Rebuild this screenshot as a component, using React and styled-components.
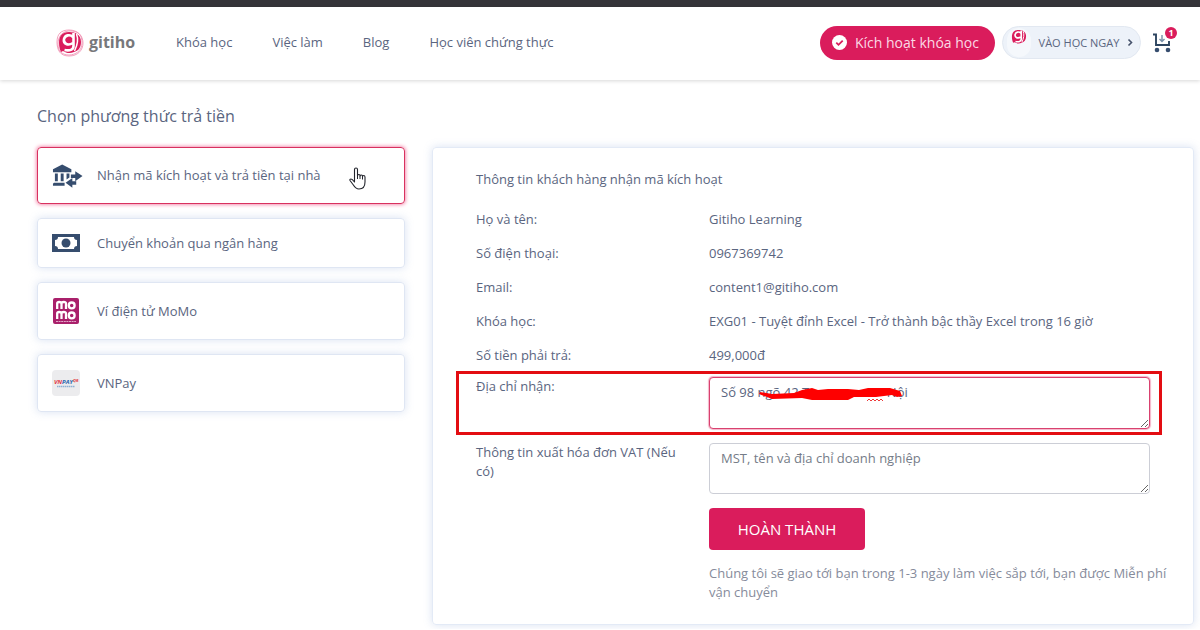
import React, { useState } from "react";
import styled, { createGlobalStyle, css } from "styled-components";

const pink = "#da1c5c";
const ink = "#5a6580";
const navy = "#364d6e";

const GlobalStyle = createGlobalStyle`
  *, *::before, *::after { box-sizing: border-box; }
  body {
    margin: 0;
    background: #fff;
    color: ${ink};
    font-family: "Open Sans", "Noto Sans", sans-serif;
    font-size: 13px;
    line-height: 19px;
  }
  button, textarea { font: inherit; color: inherit; }
`;

const TopStrip = styled.div`
  height: 7px;
  background: #353439;
`;

const Header = styled.header`
  display: flex;
  align-items: center;
  height: 73px;
  padding: 0 28px 2px 56px;
  box-shadow: 0 1px 4px rgba(0, 0, 0, 0.16);
`;

const Brand = styled.a`
  display: flex;
  align-items: center;
  gap: 5px;
  width: 120px;
  color: #77787b;
  font-size: 16px;
  font-weight: 700;
  text-decoration: none;
`;

const Nav = styled.nav`
  display: flex;
  flex: 1;
  gap: 40px;
`;

const NavLink = styled.a`
  color: ${ink};
  white-space: nowrap;
  text-decoration: none;
`;

const Actions = styled.div`
  display: flex;
  align-items: center;
  gap: 7px;
`;

const ActivateButton = styled.button`
  display: flex;
  align-items: center;
  gap: 8px;
  width: 175px;
  height: 34px;
  padding: 0 12px;
  border: 0;
  border-radius: 17px;
  background: ${pink};
  color: #fbd9e5;
  font-size: 14px;
  white-space: nowrap;
`;

const LearnButton = styled.button`
  display: flex;
  align-items: center;
  justify-content: space-between;
  width: 139px;
  height: 33px;
  padding: 0 6px 0 4px;
  border: 1px solid #e2e8f1;
  border-radius: 17px;
  background: #edf2f9;
  font-size: 11px;
  white-space: nowrap;
`;

const Avatar = styled.span`
  display: flex;
  justify-content: center;
  width: 24px;
  height: 29px;
  border-radius: 12px;
  background: #f5f8fc;
`;

const CartButton = styled.button`
  position: relative;
  display: flex;
  margin-left: 4px;
  padding: 0;
  border: 0;
  background: none;
`;

const CartCount = styled.span`
  position: absolute;
  top: -6px;
  right: -5px;
  width: 12px;
  height: 12px;
  border-radius: 6px;
  background: ${pink};
  color: #fff;
  font-size: 9px;
  font-weight: 700;
  line-height: 12px;
  text-align: center;
`;

const Main = styled.main`
  padding: 24px 6px 4px 37px;
`;

const Heading = styled.h1`
  margin: 0 0 19px;
  font-size: 16px;
  font-weight: 400;
  line-height: 24px;
`;

const Columns = styled.div`
  display: grid;
  grid-template-columns: 368px minmax(0, 1fr);
  align-items: start;
  gap: 27px;
`;

const Methods = styled.div`
  display: flex;
  flex-direction: column;
  gap: 14px;
`;

const Method = styled.label`
  position: relative;
  display: flex;
  align-items: center;
  gap: 14px;
  height: ${(p) => p.$height}px;
  padding: 0 14px;
  border: 1px solid #dfe6f3;
  border-radius: 4px;
  box-shadow: 0 0 9px rgba(120, 150, 210, 0.28);
  cursor: pointer;
  ${(p) => p.$active && css`
    border-color: #d8315f;
    box-shadow: 0 0 4px #f0578a;
  `}
`;

const HiddenRadio = styled.input`
  position: absolute;
  opacity: 0;
  pointer-events: none;
`;

const MethodIcon = styled.span`
  display: flex;
  width: 31px;
`;

const Pointer = styled.svg`
  position: absolute;
  top: 19px;
  right: 38px;
`;

const Panel = styled.form`
  margin: 0;
  padding: 22px 43px 22px;
  border: 1px solid #e3eaf6;
  border-radius: 4px;
  box-shadow: 0 0 9px rgba(120, 150, 210, 0.28);
`;

const PanelTitle = styled.h2`
  margin: 0 0 21px;
  font-size: 13px;
  font-weight: 400;
  line-height: 19px;
`;

const Details = styled.dl`
  display: flex;
  flex-direction: column;
  gap: 15px;
  margin: 0 0 12px;
`;

const Row = styled.div`
  position: relative;
  display: grid;
  grid-template-columns: 205px minmax(0, 1fr);
  gap: 28px;
`;

const Value = styled.dd`
  margin: 0;
`;

const Fields = styled.div`
  display: flex;
  flex-direction: column;
  gap: 14px;
`;

const Control = styled.div`
  position: relative;
  display: flex;
`;

const TextArea = styled.textarea`
  width: 100%;
  height: ${(p) => (p.$focused ? 52 : 51)}px;
  padding: 5px 11px;
  border: 1px solid ${(p) => (p.$focused ? "#d9416f" : "#ccced6")};
  border-radius: 4px;
  outline: 0;
  background: #fff;
  box-shadow: ${(p) => (p.$focused ? "0 0 1px 1px #f4b3c8" : "none")};
  resize: vertical;
  &::placeholder { color: #757c88; opacity: 1; }
`;

const Highlight = styled.span`
  position: absolute;
  inset: -6px -12px -6px -20px;
  border: 3px solid #e30d12;
  pointer-events: none;
`;

const Scribble = styled.svg`
  position: absolute;
  top: 9px;
  left: 49px;
  pointer-events: none;
`;

const Finish = styled.div`
  grid-column: 2;
`;

const SubmitButton = styled.button`
  width: 156px;
  height: 42px;
  border: 0;
  border-radius: 4px;
  background: ${pink};
  color: #fff;
  font-size: 15px;
`;

const Note = styled.p`
  margin: 14px -24px 0 0;
  color: #868b9b;
`;

const Mark = ({ size, plain }) => (
  <svg width={size} height={size} viewBox="0 0 28 28" aria-hidden="true">
    {!plain && (
      <g fill="none" stroke="#ef8aad" strokeWidth=".8">
        <path d="M13 1C5 1 1 5 1 13s3 14 12 14 14-6 14-13S22 1 13 1Z" />
        <path d="M16 2C7 1 2 7 2 15s5 11 11 11 13-4 13-12S23 3 16 2Z" />
      </g>
    )}
    <path fill={pink} d="M13 3C6 3 3 7 3 14c0 4 1 7 2 9l2-1c3 2 7 3 11 1 4-1 7-4 7-10 0-7-5-10-12-10Z" />
    <path fill="none" stroke="#fff" strokeWidth="2.600" d="M17 8c-3-3-8-2-9 2-1 5 4 7 9 4M17.500 4v13c0 4-4 5-9 4" />
    <path fill="none" stroke="#fff" strokeWidth="1.500" d="M20.500 5c2 5 1 11-2 17" />
  </svg>
);

const CheckIcon = () => (
  <svg width="15" height="15" viewBox="0 0 15 15" aria-hidden="true">
    <circle cx="7.500" cy="7.500" r="7.500" fill="#fff" />
    <path d="m4.300 7.600 2.200 2.200 4.200-4.200" fill="none" stroke={pink} strokeWidth="1.800" />
  </svg>
);

const ChevronIcon = () => (
  <svg width="7" height="9" viewBox="0 0 7 9" aria-hidden="true">
    <path d="m1.500 1.500 3 3-3 3" fill="none" stroke="#45516a" strokeWidth="1.600" />
  </svg>
);

const CartIcon = () => (
  <svg width="20" height="20" viewBox="0 0 20 20" aria-hidden="true">
    <path d="M1 1.500h3v10.500h13V8" fill="none" stroke="#2d4560" strokeWidth="1.900" />
    <path d="M10 2v6M7.500 6 10 8.500 12.500 6" fill="none" stroke="#7890a8" strokeWidth="1.400" />
    <circle cx="5" cy="17" r="2.300" fill={navy} />
    <circle cx="16" cy="17" r="2.300" fill={navy} />
  </svg>
);

const BankIcon = () => (
  <svg width="32" height="24" viewBox="0 0 32 24" fill={navy} aria-hidden="true">
    <path d="M10.500 0 20 5v3H1V5ZM3 9.500h3v8H3zM9 9.500h3v8H9zM15 9.500h3v4l-3 2zM2 19h11v3H1v-2z" />
    <path d="M24 7v3.500h-4.500v3.500H24v3.500L31.500 12ZM21 14v3.500h4v3.500h-4v3L14 19Z" />
  </svg>
);

const CashIcon = () => (
  <svg width="28" height="18" viewBox="0 0 28 18" aria-hidden="true">
    <path fill={navy} d="M0 0h28v18H0z" />
    <path fill="#fff" d="M6 3h16c0 2 1 3 3 3v6c-2 0-3 1-3 3H6c0-2-1-3-3-3V6c2 0 3-1 3-3Z" />
    <circle cx="14" cy="9" r="4.500" fill={navy} />
  </svg>
);

const MomoIcon = () => (
  <svg width="28" height="26" viewBox="0 0 28 26" aria-hidden="true">
    <rect x="1" width="26" height="26" rx="2" fill="#a9206b" />
    <g fill="none" stroke="#fff" strokeWidth="2.300">
      <path d="M5.200 11V5.500q0-1.500 2-1.500t2.300 1.500V11M9.500 5.500q0-1.500 2.300-1.500t2.200 1.500V11" />
      <circle cx="19.700" cy="7.400" r="2.900" />
      <path d="M5.200 21v-5.500q0-1.500 2-1.500t2.300 1.500V21M9.500 15.500q0-1.500 2.300-1.500t2.200 1.500V21" />
      <circle cx="19.700" cy="17.400" r="2.900" />
    </g>
    <path d="M4 23.500h20" stroke="#e2a6c8" strokeDasharray="2 .6" />
  </svg>
);

const VnpayIcon = () => (
  <svg width="28" height="26" viewBox="0 0 28 26" aria-hidden="true">
    <rect width="28" height="26" rx="4" fill="#ececee" />
    <g fontFamily="Open Sans, sans-serif" fontWeight="700" fontStyle="italic">
      <text x="2" y="14" fontSize="6" fill="#e2353c">VN</text>
      <text x="10" y="14" fontSize="6" fill="#1e63ac">PAY</text>
      <text x="21" y="12" fontSize="4" fill="#e2353c">QR</text>
    </g>
    <path d="M5 16.500h18" stroke="#8fb0d2" strokeWidth="1.300" strokeDasharray="1.500 .5" />
  </svg>
);

const HandPointer = () => (
  <Pointer width="17" height="23" viewBox="0 0 17 23" aria-hidden="true">
    <path
      d="M5.500 13V2.500q0-1.500 1.500-1.500t1.500 1.500V9q0-1.500 1.300-1.500T11 9q0-1 1.300-1t1.200 1.500q0-1 1.200-1T16 10v5c0 4-2 7-6 7-3 0-4.500-2-6-4.500L1 13.500q-.5-1.500 1-1.500c1 0 2 1 3.500 3Z"
      fill="#fff"
      stroke="#22242c"
      strokeWidth="1.100"
      strokeLinejoin="round"
    />
    <path d="M8.500 9v3M11 9v3M13.500 9.500v3" stroke="#22242c" />
  </Pointer>
);

const methods = [
  { id: "cod", label: "Nhận mã kích hoạt và trả tiền tại nhà", Icon: BankIcon, height: 57 },
  { id: "bank", label: "Chuyển khoản qua ngân hàng", Icon: CashIcon, height: 50 },
  { id: "momo", label: "Ví điện tử MoMo", Icon: MomoIcon, height: 58 },
  { id: "vnpay", label: "VNPay", Icon: VnpayIcon, height: 58 },
];

const details = [
  ["Họ và tên:", "Gitiho Learning"],
  ["Số điện thoại:", "0967369742"],
  ["Email:", "content1@gitiho.com"],
  ["Khóa học:", "EXG01 - Tuyệt đỉnh Excel - Trở thành bậc thầy Excel trong 16 giờ"],
  ["Số tiền phải trả:", "499,000đ"],
];

const address = "Số 98 ngõ 42 T" + "\u00a0".repeat(23) + "Nội";

export default function App() {
  const [method, setMethod] = useState("cod");
  return (
    <>
      <GlobalStyle />
      <TopStrip />
      <Header>
        <Brand href="#"><Mark size={28} />gitiho</Brand>
        <Nav>
          {["Khóa học", "Việc làm", "Blog", "Học viên chứng thực"].map((item) => (
            <NavLink key={item} href="#">{item}</NavLink>
          ))}
        </Nav>
        <Actions>
          <ActivateButton><CheckIcon />Kích hoạt khóa học</ActivateButton>
          <LearnButton>
            <Avatar><Mark size={18} plain /></Avatar>
            VÀO HỌC NGAY
            <ChevronIcon />
          </LearnButton>
          <CartButton aria-label="Giỏ hàng"><CartIcon /><CartCount>1</CartCount></CartButton>
        </Actions>
      </Header>
      <Main>
        <Heading>Chọn phương thức trả tiền</Heading>
        <Columns>
          <Methods>
            {methods.map(({ id, label, Icon, height }) => (
              <Method key={id} $active={method === id} $height={height}>
                <HiddenRadio type="radio" name="method" checked={method === id} onChange={() => setMethod(id)} />
                <MethodIcon><Icon /></MethodIcon>
                {label}
                {id === "cod" && <HandPointer />}
              </Method>
            ))}
          </Methods>
          <Panel onSubmit={(e) => e.preventDefault()}>
            <PanelTitle>Thông tin khách hàng nhận mã kích hoạt</PanelTitle>
            <Details>
              {details.map(([term, value]) => (
                <Row key={term}><dt>{term}</dt><Value>{value}</Value></Row>
              ))}
            </Details>
            <Fields>
              <Row>
                <label htmlFor="address">Địa chỉ nhận:</label>
                <Control>
                  <TextArea id="address" $focused spellCheck={false} defaultValue={address} />
                  <Scribble width="146" height="20" viewBox="0 0 146 20" aria-hidden="true">
                    <path
                      fill="#fe0000"
                      d="M2 6 14 8 36 7 44 4 54 2 60 4 70 3 90 3 101 4 110 2 132 2 142 5 144 10 139 11 134 9 118 11 96 11 90 14 54 14 44 12 14 13 9 11 1 8Z"
                    />
                    <path d="m109 15 2-2 2 2 2-2 2 2 2-2 2 2 2-2 2 2" fill="none" stroke="#ee3a3a" />
                  </Scribble>
                </Control>
                <Highlight />
              </Row>
              <Row>
                <label htmlFor="vat">Thông tin xuất hóa đơn VAT (Nếu có)</label>
                <Control>
                  <TextArea id="vat" placeholder="MST, tên và địa chỉ doanh nghiệp" />
                </Control>
              </Row>
              <Row>
                <Finish>
                  <SubmitButton type="submit">HOÀN THÀNH</SubmitButton>
                  <Note>Chúng tôi sẽ giao tới bạn trong 1-3 ngày làm việc sắp tới, bạn được Miễn phí vận chuyển</Note>
                </Finish>
              </Row>
            </Fields>
          </Panel>
        </Columns>
      </Main>
    </>
  );
}
